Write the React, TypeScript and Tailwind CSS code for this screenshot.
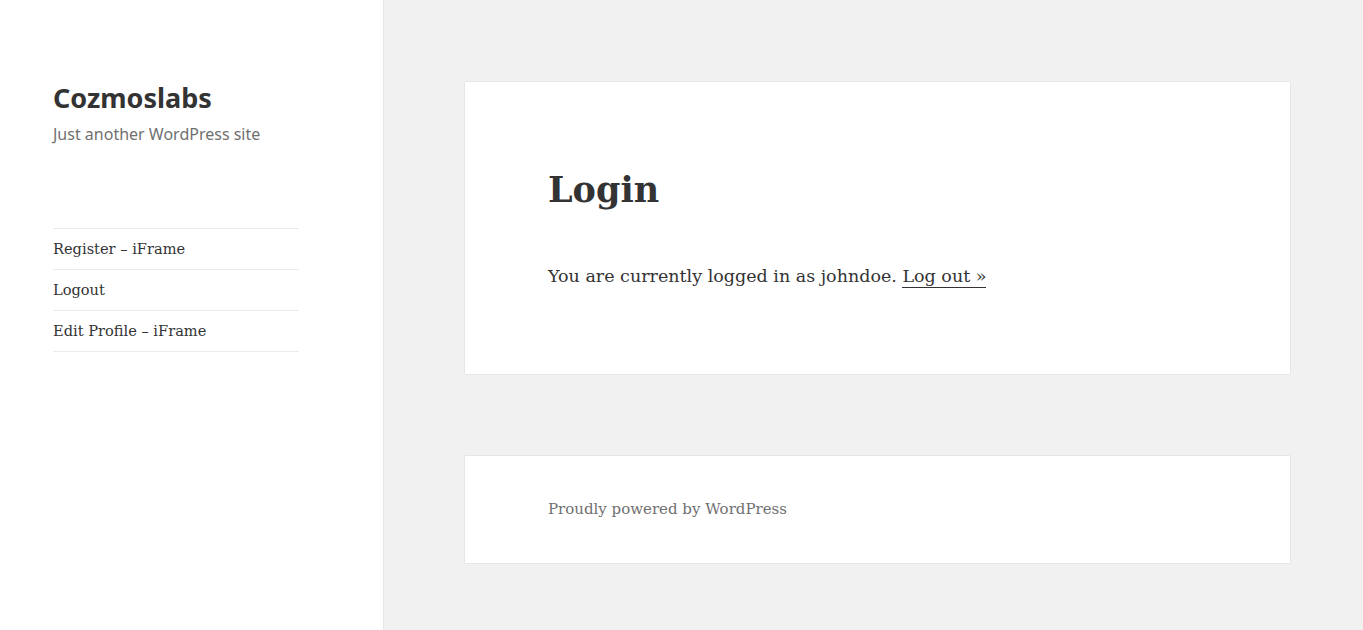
const MENU = ["Register – iFrame", "Logout", "Edit Profile – iFrame"];

const serif = "font-['DejaVu_Serif','Liberation_Serif',serif]";
const sans = "font-['Noto_Sans','Open_Sans',sans-serif]";

export default function App() {
  return (
    <div className="min-h-screen bg-[#f1f1f1] flex text-[#333]">
      {/* Sidebar */}
      <aside className="w-[383px] shrink-0 min-h-screen bg-white shadow-[0_0_1px_rgba(0,0,0,0.25)] pl-[53px] pt-[78px]">
        <div className={sans}>
          <h1 className="text-[27px] font-bold leading-[40px] text-[#333]">Cozmoslabs</h1>
          <p className="text-[16px] leading-[24px] text-[#707070] mt-[4px]">
            Just another WordPress site
          </p>
        </div>

        <nav className="mt-[82px] w-[246px] border-t border-[#eaeaea]">
          {MENU.map((item) => (
            <div
              key={item}
              className={`${serif} text-[14.6px] leading-[40px] border-b border-[#eaeaea] text-[#333]`}
            >
              {item}
            </div>
          ))}
        </nav>
      </aside>

      {/* Content */}
      <main className="flex-1 pl-[82px] pr-[73px] pt-[82px]">
        <article className="bg-white shadow-[0_0_1px_rgba(0,0,0,0.25)] h-[292px] px-[83px] pt-[85px]">
          <h2 className={`${serif} text-[35px] font-bold leading-[46px] text-[#333]`}>Login</h2>
          <p className={`${serif} text-[17.5px] leading-[28px] mt-[49px] text-[#333]`}>
            You are currently logged in as johndoe.{" "}
            <a className="border-b border-[#333] pb-[1px]">Log out »</a>
          </p>
        </article>

        <footer className="bg-white shadow-[0_0_1px_rgba(0,0,0,0.25)] h-[107px] mt-[82px] px-[83px] flex items-center">
          <p className={`${serif} text-[15px] text-[#707070]`}>Proudly powered by WordPress</p>
        </footer>
      </main>
    </div>
  );
}
